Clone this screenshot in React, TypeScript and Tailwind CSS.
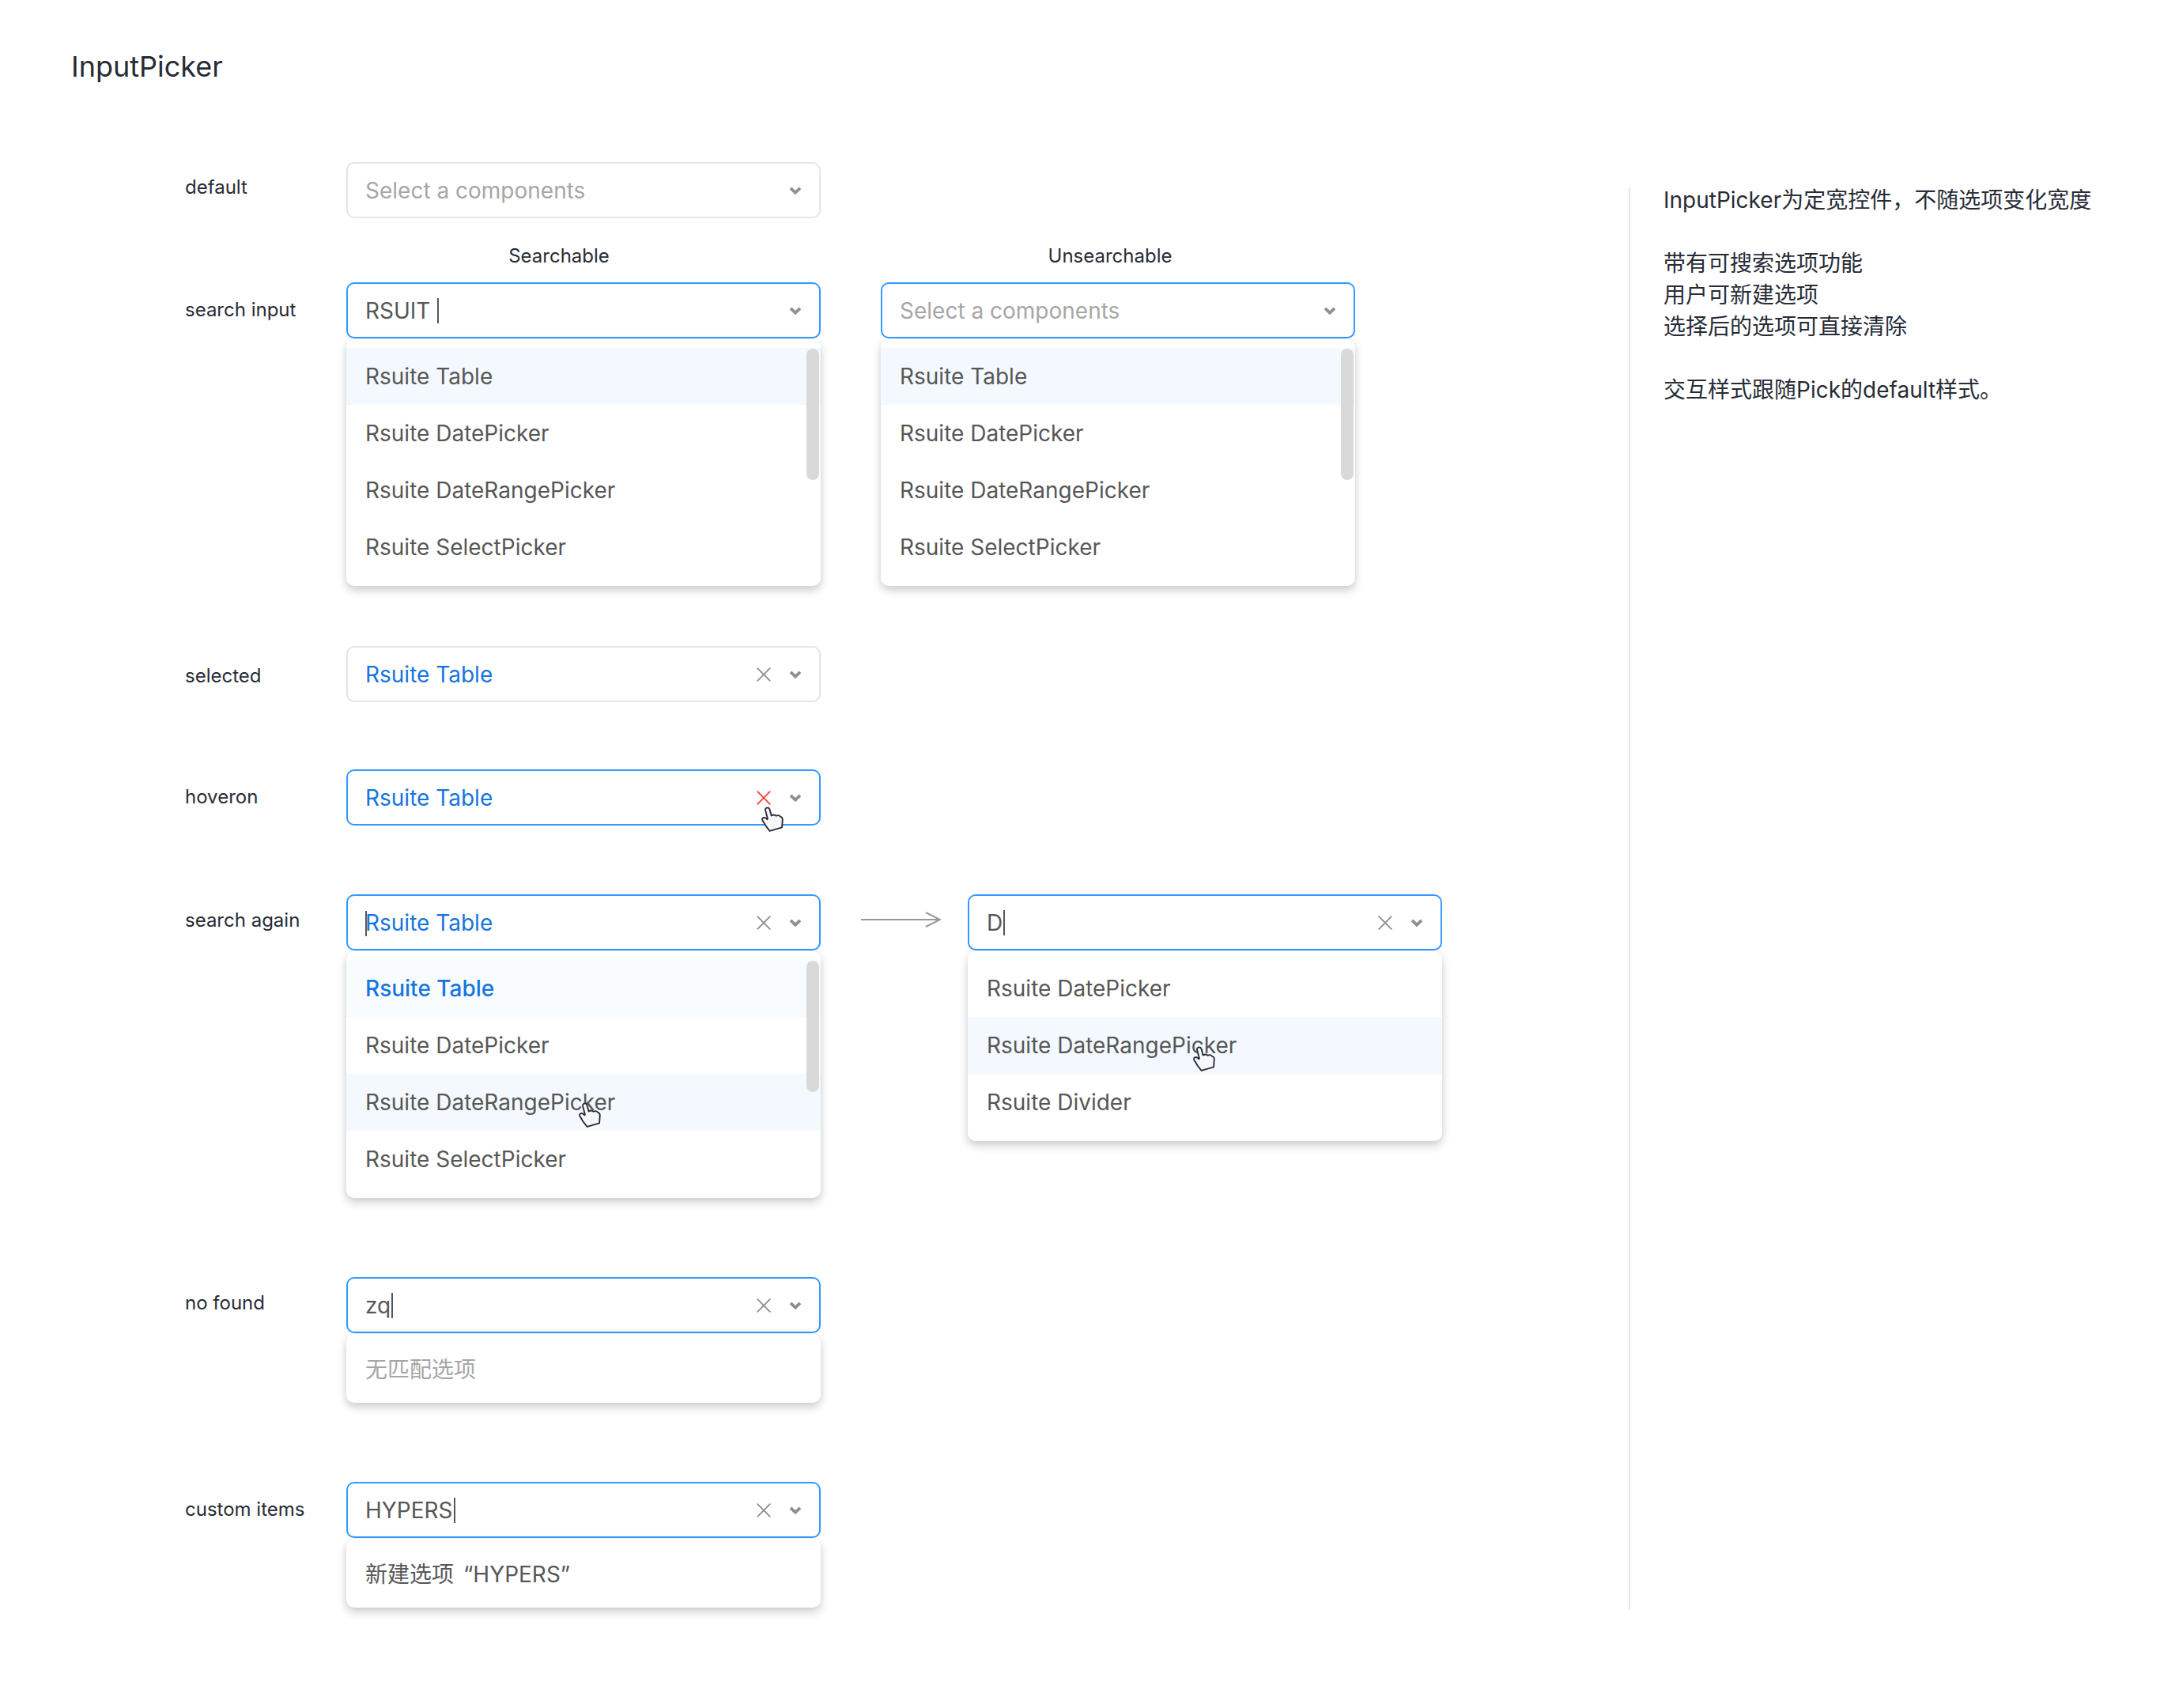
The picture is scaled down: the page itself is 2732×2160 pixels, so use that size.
import React from 'react';

const font = "[font-family:'Inter','Noto_Sans_CJK_SC',sans-serif]";

const Chevron = () => (
  <svg width="16" height="10" viewBox="0 0 16 10" className="shrink-0">
    <path d="M2 1.800 L8 7.600 L14 1.800" fill="none" stroke="#8e8e93" strokeWidth="3.800" />
  </svg>
);

const Clear = ({ hover }: { hover?: boolean }) => (
  <svg width="18" height="18" viewBox="0 0 18 18" className="shrink-0">
    <path d="M.7 .7 L17.300 17.300 M17.300 .7 L.7 17.300" fill="none" stroke={hover ? '#f44336' : '#8e8e93'} strokeWidth="1.800" />
  </svg>
);

const Hand = ({ className }: { className: string }) => (
  <svg width="30" height="33" viewBox="66 106 88 98" className={`absolute ${className}`}>
    <path
      d="M83 118Q84 110 92 110Q98 110 100 118L106 140Q116 134 124 141Q134 136 140 144Q148 146 148 154L146 184L100 198L86 180L74 160Q68 152 76 148Q84 146 90 154L92 152Z"
      fill="#f7f8fa"
      stroke="#272c36"
      strokeWidth="5.500"
      strokeLinejoin="round"
    />
  </svg>
);

type PickerProps = {
  value?: string;
  tone?: 'placeholder' | 'text' | 'selected';
  focused?: boolean;
  clear?: boolean;
  clearHover?: boolean;
  caret?: 'after' | 'gap' | 'before';
  children?: React.ReactNode;
};

const Picker = ({ value, tone = 'text', focused, clear, clearHover, caret, children }: PickerProps) => (
  <div
    className={`relative flex h-[71px] w-[600px] items-center rounded-[10px] border-2 bg-white pl-[22px] pr-[22px] ${
      focused ? 'border-[#3498ff]' : 'border-[#e5e5ea]'
    }`}
  >
    {caret === 'before' && <span className="absolute left-[22px] top-[19px] h-[32px] w-[2px] bg-[#575757]" />}
    <span
      className={`text-[28px] leading-[40px] ${
        tone === 'placeholder' ? 'text-[#a6a6a6]' : tone === 'selected' ? 'text-[#1675e0]' : 'text-[#575757]'
      }`}
    >
      {value}
    </span>
    {caret === 'after' && <span className="ml-[1px] h-[32px] w-[2px] bg-[#575757]" />}
    {caret === 'gap' && <span className="ml-[9px] h-[32px] w-[2px] bg-[#575757]" />}
    <span className="ml-auto flex items-center gap-[23px]">
      {clear && <Clear hover={clearHover} />}
      <Chevron />
    </span>
    {children}
  </div>
);

const Menu = ({ children, bar, single }: { children: React.ReactNode; bar?: boolean; single?: boolean }) => (
  <div
    className={`relative mt-[1px] w-[600px] rounded-[10px] bg-white shadow-[0_6px_12px_rgba(0,0,0,0.18),0_0_8px_rgba(0,0,0,0.05)] ${
      single ? 'pb-[6px] pt-[9px]' : 'pb-[13px] pt-[11px]'
    }`}
  >
    {children}
    {bar && <div className="absolute right-[2px] top-[12px] h-[166px] w-[16px] rounded-full bg-[#d9d9d9]" />}
  </div>
);

const Item = ({
  children,
  active,
  selected,
  muted,
}: {
  children: React.ReactNode;
  active?: boolean;
  selected?: boolean;
  muted?: boolean;
}) => (
  <div
    className={`flex h-[72px] items-center pl-[24px] text-[28px] ${
      selected ? 'bg-[#f8fcff] font-medium text-[#1675e0]' : active ? 'bg-[#f3f9fe] text-[#575757]' : muted ? 'text-[#a6a6a6]' : 'text-[#575757]'
    }`}
  >
    {children}
  </div>
);

const Label = ({ children, className }: { children: React.ReactNode; className: string }) => (
  <div className={`w-[204px] shrink-0 text-[24px] leading-[32px] text-[#272c36] ${className}`}>{children}</div>
);

export default function App() {
  return (
    <div className={`h-[2160px] w-[2732px] bg-white ${font}`}>
      <h1 className="pl-[90px] pt-[59px] text-[36px] leading-[50px] text-[#272c36]">InputPicker</h1>
      <div className="flex">
        <div className="w-[2060px] pl-[234px]">
          <div className="mt-[96px] flex">
            <Label className="mt-[16px]">default</Label>
            <Picker value="Select a components" tone="placeholder" />
          </div>

          <div className="mt-[32px] flex pl-[205px] text-[24px] leading-[32px] text-[#272c36]">
            <div className="w-[536px] text-center">Searchable</div>
            <div className="ml-[161px] w-[536px] text-center">Unsearchable</div>
          </div>

          <div className="mt-[17px] flex">
            <Label className="mt-[19px]">search input</Label>
            <div>
              <Picker value="RSUIT" focused caret="gap" />
              <Menu bar>
                <Item active>Rsuite Table</Item>
                <Item>Rsuite DatePicker</Item>
                <Item>Rsuite DateRangePicker</Item>
                <Item>Rsuite SelectPicker</Item>
              </Menu>
            </div>
            <div className="ml-[76px]">
              <Picker value="Select a components" tone="placeholder" focused />
              <Menu bar>
                <Item active>Rsuite Table</Item>
                <Item>Rsuite DatePicker</Item>
                <Item>Rsuite DateRangePicker</Item>
                <Item>Rsuite SelectPicker</Item>
              </Menu>
            </div>
          </div>

          <div className="mt-[76px] flex">
            <Label className="mt-[22px]">selected</Label>
            <Picker value="Rsuite Table" tone="selected" clear />
          </div>

          <div className="mt-[85px] flex">
            <Label className="mt-[19px]">hoveron</Label>
            <Picker value="Rsuite Table" tone="selected" focused clear clearHover>
              <Hand className="right-[44px] top-[45px]" />
            </Picker>
          </div>

          <div className="mt-[87px] flex">
            <Label className="mt-[17px]">search again</Label>
            <div>
              <Picker value="Rsuite Table" tone="selected" focused clear caret="before" />
              <Menu bar>
                <Item selected>Rsuite Table</Item>
                <Item>Rsuite DatePicker</Item>
                <div className="relative">
                  <Item active>Rsuite DateRangePicker</Item>
                  <Hand className="left-[293px] top-[36px]" />
                </div>
                <Item>Rsuite SelectPicker</Item>
              </Menu>
            </div>
            <svg width="102" height="20" viewBox="0 0 102 20" className="ml-[51px] mt-[22px] shrink-0">
              <path d="M0 10 H99 M82 1 L100 10 L82 19" fill="none" stroke="#999999" strokeWidth="2" />
            </svg>
            <div className="ml-[33px]">
              <Picker value="D" focused clear caret="after" />
              <Menu>
                <Item>Rsuite DatePicker</Item>
                <div className="relative">
                  <Item active>Rsuite DateRangePicker</Item>
                  <Hand className="left-[284px] top-[37px]" />
                </div>
                <Item>Rsuite Divider</Item>
              </Menu>
            </div>
          </div>

          <div className="mt-[100px] flex">
            <Label className="mt-[17px]">no found</Label>
            <div>
              <Picker value="zq" focused clear caret="after" />
              <Menu single>
                <Item muted>无匹配选项</Item>
              </Menu>
            </div>
          </div>

          <div className="mt-[100px] flex">
            <Label className="mt-[19px]">custom items</Label>
            <div>
              <Picker value="HYPERS" focused clear caret="after" />
              <Menu single>
                <Item>
                  新建选项<span className="ml-[12px]">“HYPERS”</span>
                </Item>
              </Menu>
            </div>
          </div>
        </div>

        <aside className="mt-[128px] h-[1798px] w-[44px] shrink-0 border-l-2 border-[#e5e5ea]" />
        <div className="mt-[124px] text-[28px] leading-[40px] text-[#272c36]">
          <p>InputPicker为定宽控件，不随选项变化宽度</p>
          <p className="mt-[40px]">带有可搜索选项功能</p>
          <p>用户可新建选项</p>
          <p>选择后的选项可直接清除</p>
          <p className="mt-[40px]">交互样式跟随Pick的default样式。</p>
        </div>
      </div>
    </div>
  );
}
